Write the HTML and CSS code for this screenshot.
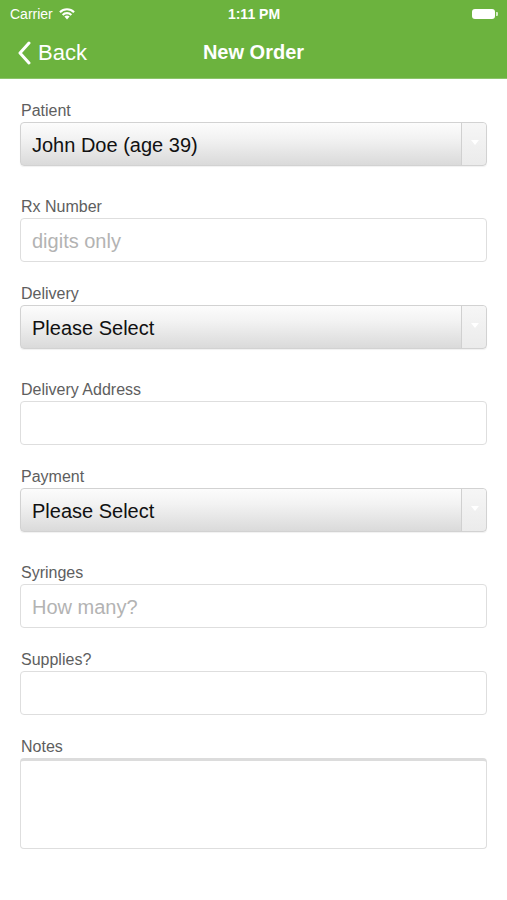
FILE: index.html
```html
<!DOCTYPE html>
<html lang="en">

<head>
    <meta charset="UTF-8">
    <meta name="viewport" content="width=device-width, initial-scale=1.0">
    <title>New Order</title>
    <link rel="stylesheet" href="styles.css">
</head>

<body>

    <!-- Top bar -->
    <header class="topbar">
        <div class="status">
            <div class="status-left">
                <span>Carrier</span>
                <svg class="wifi" width="18" height="13" viewBox="0 0 18 13">
                    <path d="M9 12.5 L6.4 9.6 A3.8 3.8 0 0 1 11.6 9.6 Z" fill="#fff"/>
                    <path d="M3.9 7.2 A7.2 7.2 0 0 1 14.1 7.2 L12.6 8.7 A5.1 5.1 0 0 0 5.4 8.7 Z" fill="#fff"/>
                    <path d="M1.2 4.4 A11 11 0 0 1 16.8 4.4 L15.3 5.9 A8.9 8.9 0 0 0 2.7 5.9 Z" fill="#fff"/>
                </svg>
            </div>
            <div class="status-time">1:11 PM</div>
            <div class="status-right">
                <span class="battery"></span>
                <span class="battery-nub"></span>
            </div>
        </div>
        <nav class="navbar">
            <a class="back" href="#">
                <svg width="14" height="24" viewBox="0 0 14 24">
                    <path d="M12 2 L3 12 L12 22" fill="none" stroke="#fff" stroke-width="3" stroke-linecap="round" stroke-linejoin="round"/>
                </svg>
                <span>Back</span>
            </a>
            <h1>New Order</h1>
        </nav>
    </header>

    <!-- Formulář -->
    <form class="form">
        <div class="field field-select">
            <label>Patient</label>
            <div class="select">
                <span class="select-value">John Doe (age 39)</span>
                <span class="select-arrow"></span>
            </div>
        </div>

        <div class="field">
            <label>Rx Number</label>
            <input class="input" type="text" placeholder="digits only">
        </div>

        <div class="field field-select">
            <label>Delivery</label>
            <div class="select">
                <span class="select-value">Please Select</span>
                <span class="select-arrow"></span>
            </div>
        </div>

        <div class="field">
            <label>Delivery Address</label>
            <input class="input" type="text">
        </div>

        <div class="field field-select">
            <label>Payment</label>
            <div class="select">
                <span class="select-value">Please Select</span>
                <span class="select-arrow"></span>
            </div>
        </div>

        <div class="field">
            <label>Syringes</label>
            <input class="input" type="text" placeholder="How many?">
        </div>

        <div class="field">
            <label>Supplies?</label>
            <input class="input" type="text">
        </div>

        <div class="field">
            <label>Notes</label>
            <textarea class="textarea"></textarea>
        </div>
    </form>

</body>

</html>
```

FILE: styles.css
```css
body {
    margin: 0;
    padding: 0;
    background-color: #fff;
    font-family: "Liberation Sans", Arial, sans-serif;
    color: #111;
}

/* Horní lišta */
.topbar {
    background-color: #6cb33e;
    color: #fff;
    border-bottom: 1px solid #8cc46a;
}

.status {
    display: flex;
    align-items: center;
    justify-content: space-between;
    height: 27px;
    padding: 0 9px 0 10px;
    font-size: 14px;
}

.status-left {
    display: flex;
    align-items: center;
    gap: 5px;
    width: 100px;
}

.status-time {
    font-weight: bold;
    font-size: 14px;
}

.status-right {
    display: flex;
    align-items: center;
    justify-content: flex-end;
    width: 100px;
}

.battery {
    width: 23px;
    height: 10px;
    background-color: #fff;
    border-radius: 3px;
}

.battery-nub {
    width: 2px;
    height: 4px;
    margin-left: 1px;
    background-color: #d6ecc6;
    border-radius: 0 1px 1px 0;
}

.navbar {
    position: relative;
    display: flex;
    align-items: center;
    justify-content: center;
    height: 51px;
}

.back {
    position: absolute;
    left: 17px;
    top: 13px;
    display: flex;
    align-items: center;
    gap: 7px;
    color: #fff;
    text-decoration: none;
    font-size: 22px;
}

.navbar h1 {
    margin: 0;
    font-size: 20px;
    font-weight: bold;
}

/* Formulář */
.form {
    padding: 22px 20px 40px 20px;
}

.field {
    display: flex;
    flex-direction: column;
    margin-bottom: 22px;
}

.field-select {
    margin-bottom: 31px;
}

.field label {
    font-size: 16px;
    line-height: 19px;
    color: #5e5e5e;
    margin-left: 1px;
    margin-bottom: 2px;
}

.select {
    display: flex;
    height: 42px;
    border: 1px solid #d2d2d2;
    border-radius: 4px;
    background: linear-gradient(#fcfcfc, #f3f3f3 35%, #dadada);
    box-shadow: 0 1px 1px rgba(0, 0, 0, 0.06);
}

.select-value {
    flex: 1;
    display: flex;
    align-items: center;
    padding-left: 11px;
    padding-top: 2px;
    font-size: 20px;
    color: #111;
}

.select-arrow {
    width: 24px;
    border-left: 1px solid #d0d0d0;
    background: linear-gradient(#f6f6f6, #ebebeb);
    border-radius: 0 4px 4px 0;
    position: relative;
}

.select-arrow::after {
    content: "";
    position: absolute;
    left: 9px;
    top: 17px;
    border-left: 4px solid transparent;
    border-right: 4px solid transparent;
    border-top: 5px solid #fff;
}

.input {
    height: 44px;
    box-sizing: border-box;
    border: 1px solid #dedede;
    border-radius: 4px;
    padding: 3px 11px 0 11px;
    font-family: inherit;
    font-size: 20px;
    color: #111;
    background: #fff;
    outline: none;
}

.input::placeholder {
    color: #b3b3b3;
}

.textarea {
    height: 91px;
    box-sizing: border-box;
    border: 1px solid #dedede;
    border-top: 3px solid #dcdcdc;
    border-radius: 4px;
    resize: none;
    font-family: inherit;
    font-size: 20px;
    outline: none;
}
```
